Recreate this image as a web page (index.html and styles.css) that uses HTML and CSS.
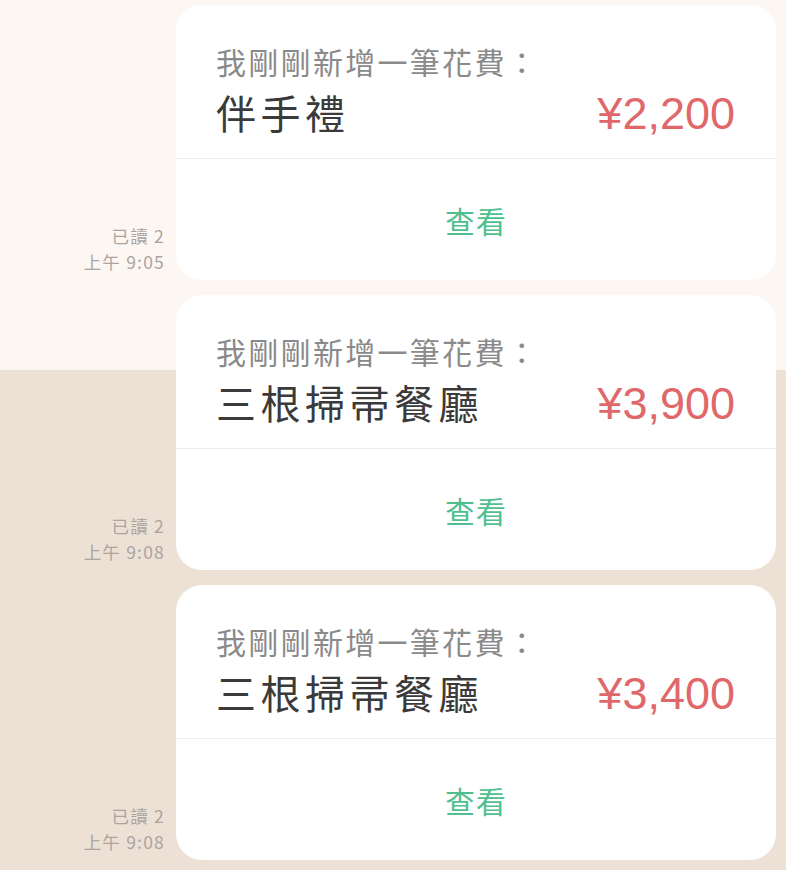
FILE: index.html
```html
<!DOCTYPE html>
<html lang="zh-Hant">
<head>
<meta charset="utf-8">
<link rel="stylesheet" href="styles.css">
</head>
<body>
<div class="chat">
  <div class="msg">
    <div class="meta"><div>已讀 2</div><div>上午 9:05</div></div>
    <div class="card">
      <div class="card-top">
        <div class="label">我剛剛新增一筆花費：</div>
        <div class="row"><span class="title">伴手禮</span><span class="price">¥2,200</span></div>
      </div>
      <div class="card-bottom"><span class="view">查看</span></div>
    </div>
  </div>
  <div class="msg">
    <div class="meta"><div>已讀 2</div><div>上午 9:08</div></div>
    <div class="card">
      <div class="card-top">
        <div class="label">我剛剛新增一筆花費：</div>
        <div class="row"><span class="title">三根掃帚餐廳</span><span class="price">¥3,900</span></div>
      </div>
      <div class="card-bottom"><span class="view">查看</span></div>
    </div>
  </div>
  <div class="msg">
    <div class="meta"><div>已讀 2</div><div>上午 9:08</div></div>
    <div class="card">
      <div class="card-top">
        <div class="label">我剛剛新增一筆花費：</div>
        <div class="row"><span class="title">三根掃帚餐廳</span><span class="price">¥3,400</span></div>
      </div>
      <div class="card-bottom"><span class="view">查看</span></div>
    </div>
  </div>
</div>
</body>
</html>
```

FILE: styles.css
```css
html, body {
  margin: 0;
  padding: 0;
}
body {
  width: 786px;
  height: 870px;
  overflow: hidden;
  font-family: "Noto Sans CJK TC", "Noto Sans", sans-serif;
  background: linear-gradient(to bottom, #fdf7f3 0, #fdf7f3 370px, #ede0d5 370px, #ede0d5 100%);
}
.chat {
  display: flex;
  flex-direction: column;
  gap: 15px;
  padding-top: 5px;
}
.msg {
  display: flex;
  align-items: flex-end;
  gap: 11px;
}
.meta {
  width: 165px;
  text-align: right;
  font-size: 17.5px;
  line-height: 25.5px;
  color: #aba49f;
  padding-bottom: 6px;
  font-family: "Noto Sans CJK TC", sans-serif;
  letter-spacing: 1.2px;
}
.card {
  width: 600px;
  height: 275px;
  background: #ffffff;
  border-radius: 26px;
  display: flex;
  flex-direction: column;
  overflow: hidden;
}
.card-top {
  padding: 38px 41px 21px 40px;
  border-bottom: 1px solid #ececec;
}
.label {
  font-size: 30px;
  line-height: 36px;
  color: #8a8a8a;
  letter-spacing: 2.3px;
}
.row {
  display: flex;
  justify-content: space-between;
  align-items: center;
  margin-top: 8px;
  height: 50px;
}
.title {
  font-size: 40px;
  line-height: 50px;
  color: #3a3a3a;
  letter-spacing: 4.5px;
}
.price {
  font-family: "Liberation Sans", Arial, sans-serif;
  font-size: 45px;
  line-height: 50px;
  padding-top: 4px;
  color: #e0676a;
}
.card-bottom {
  flex: 1;
  display: flex;
  align-items: center;
  justify-content: center;
}
.view {
  font-size: 30px;
  color: #4fc08d;
  letter-spacing: 1px;
}
```
